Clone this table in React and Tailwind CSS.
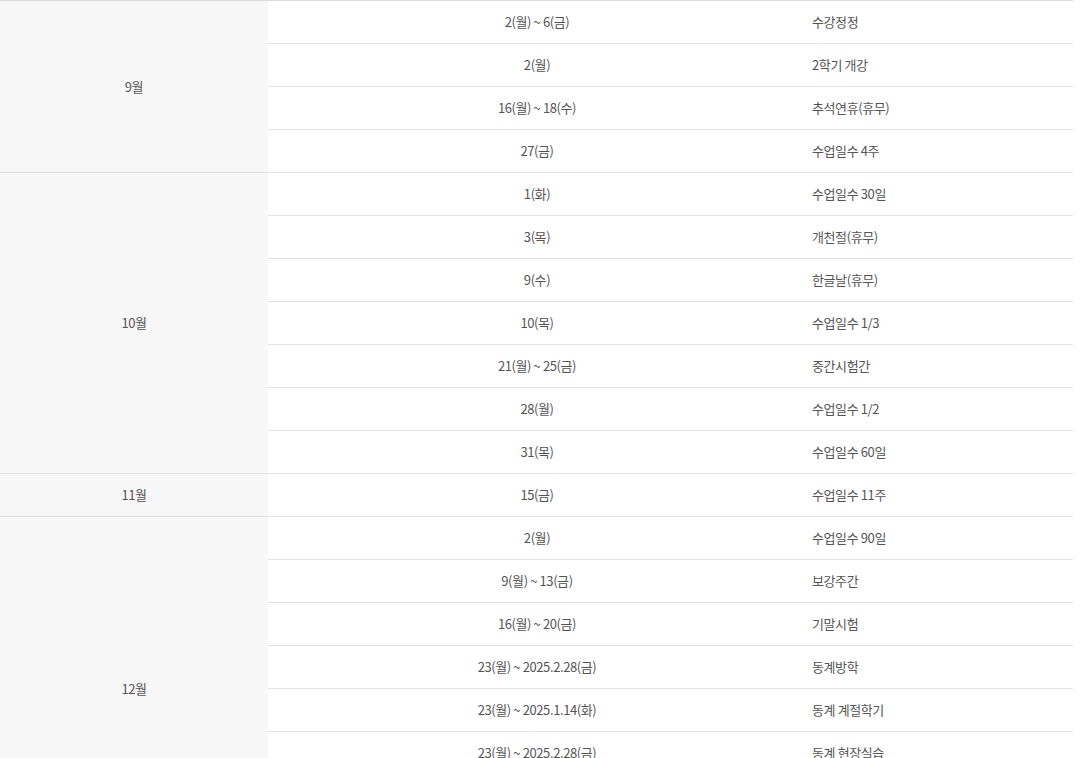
import React from 'react';

const schedule = [
    {
        month: '9월',
        items: [
            ['2(월) ~ 6(금)', '수강정정'],
            ['2(월)', '2학기 개강'],
            ['16(월) ~ 18(수)', '추석연휴(휴무)'],
            ['27(금)', '수업일수 4주'],
        ],
    },
    {
        month: '10월',
        items: [
            ['1(화)', '수업일수 30일'],
            ['3(목)', '개천절(휴무)'],
            ['9(수)', '한글날(휴무)'],
            ['10(목)', '수업일수 1/3'],
            ['21(월) ~ 25(금)', '중간시험간'],
            ['28(월)', '수업일수 1/2'],
            ['31(목)', '수업일수 60일'],
        ],
    },
    {
        month: '11월',
        items: [['15(금)', '수업일수 11주']],
    },
    {
        month: '12월',
        items: [
            ['2(월)', '수업일수 90일'],
            ['9(월) ~ 13(금)', '보강주간'],
            ['16(월) ~ 20(금)', '기말시험'],
            ['23(월) ~ 2025.2.28(금)', '동계방학'],
            ['23(월) ~ 2025.1.14(화)', '동계 계절학기'],
            ['23(월) ~ 2025.2.28(금)', '동계 현장실습'],
            ['25(수)', '성탄절(휴무)'],
            ['31(화)', '2학기 종료'],
        ],
    },
];

const App = () => {
    return (
        <div
            className="w-[1073px] bg-white text-[13px] tracking-[-0.4px] text-[#555]"
            style={{ fontFamily: '"Noto Sans CJK KR", "Noto Sans", sans-serif' }}
        >
            <div className="border-t border-[#dcdcdc]">
                {schedule.map(group => (
                    <div key={group.month} className="flex border-b border-[#e2e2e2]">
                        <div className="w-[268px] shrink-0 bg-[#f7f7f7] flex items-center justify-center">
                            {group.month}
                        </div>
                        <div className="flex-1 flex flex-col">
                            {group.items.map(([date, desc], i) => (
                                <div
                                    key={i}
                                    className={`flex h-[42px] items-center ${i < group.items.length - 1 ? 'border-b border-[#e2e2e2] h-[43px]' : ''}`}
                                >
                                    <div className="w-[538px] text-center">{date}</div>
                                    <div className="flex-1 pl-[6px]">{desc}</div>
                                </div>
                            ))}
                        </div>
                    </div>
                ))}
            </div>
        </div>
    );
};

export default App;
